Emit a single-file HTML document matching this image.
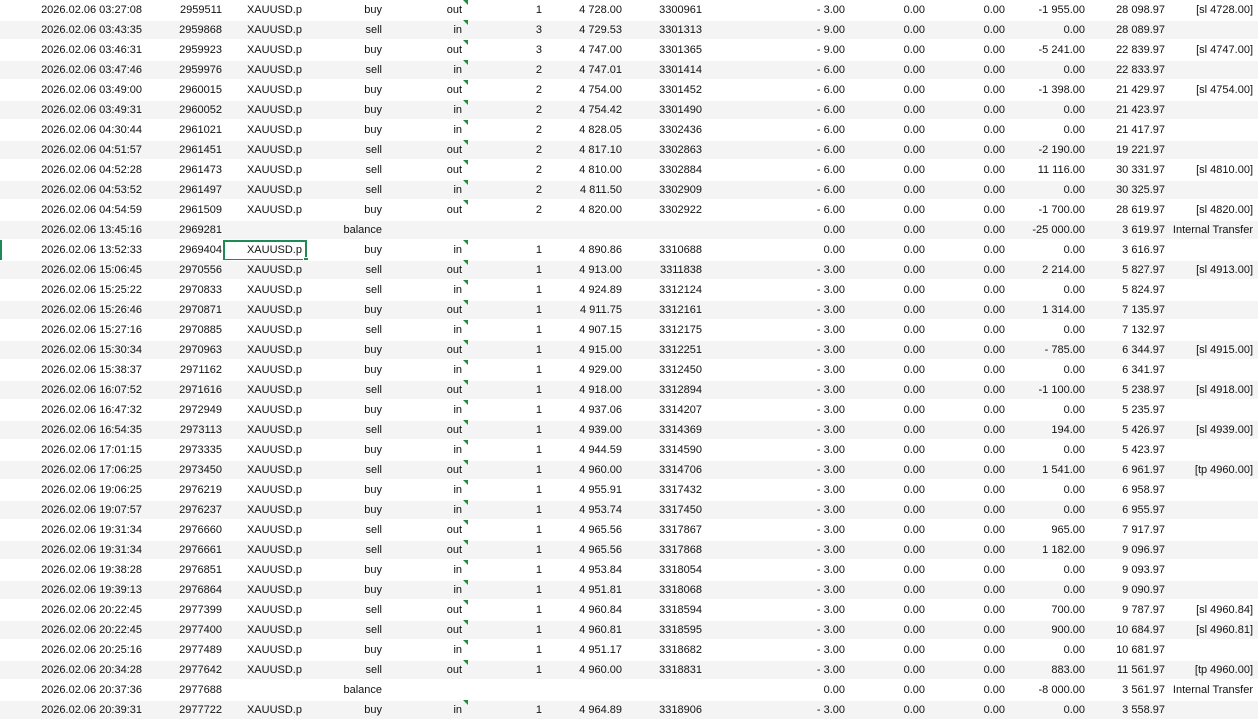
<!DOCTYPE html>
<html><head><meta charset="utf-8"><style>
body{margin:0;width:1258px;height:720px;overflow:hidden;background:#fff;font-family:"Liberation Sans",sans-serif;font-size:11px;color:#111}
.r{position:relative;height:20px;line-height:20px;display:flex;white-space:nowrap}
.r:nth-child(even){background:#f4f4f4;box-shadow:inset 0 1px 0 #fff,inset 0 -1px 0 #fff}
.r span{display:block;text-align:right;overflow:visible;letter-spacing:0;font-family:"Liberation Sans",sans-serif;font-size:11px}
.t{position:absolute;left:463px;top:0;width:0;height:0;border-top:5px solid #1d8c3c;border-left:5px solid transparent}
.sel{position:absolute;left:223px;top:0;width:80px;height:17px;border:2px solid #1e8a55}
.sel:after{content:"";position:absolute;right:-4px;bottom:-4px;width:4px;height:4px;background:#1e8a55;border:1px solid #fff}
.lb{position:absolute;left:0;top:0;width:2px;height:20px;background:#1e8a55}
</style></head><body>
<div id="t"></div>
<script>
const W=[142,80,80,80,80,80,80,80,143,80,80,80,80,88];
const D=`03:27:08|2959511|XAUUSD.p|buy|out|1|4 728.00|3300961|- 3.00|-1 955.00|28 098.97|[sl 4728.00]
03:43:35|2959868|XAUUSD.p|sell|in|3|4 729.53|3301313|- 9.00|0.00|28 089.97|
03:46:31|2959923|XAUUSD.p|buy|out|3|4 747.00|3301365|- 9.00|-5 241.00|22 839.97|[sl 4747.00]
03:47:46|2959976|XAUUSD.p|sell|in|2|4 747.01|3301414|- 6.00|0.00|22 833.97|
03:49:00|2960015|XAUUSD.p|buy|out|2|4 754.00|3301452|- 6.00|-1 398.00|21 429.97|[sl 4754.00]
03:49:31|2960052|XAUUSD.p|buy|in|2|4 754.42|3301490|- 6.00|0.00|21 423.97|
04:30:44|2961021|XAUUSD.p|buy|in|2|4 828.05|3302436|- 6.00|0.00|21 417.97|
04:51:57|2961451|XAUUSD.p|sell|out|2|4 817.10|3302863|- 6.00|-2 190.00|19 221.97|
04:52:28|2961473|XAUUSD.p|sell|out|2|4 810.00|3302884|- 6.00|11 116.00|30 331.97|[sl 4810.00]
04:53:52|2961497|XAUUSD.p|sell|in|2|4 811.50|3302909|- 6.00|0.00|30 325.97|
04:54:59|2961509|XAUUSD.p|buy|out|2|4 820.00|3302922|- 6.00|-1 700.00|28 619.97|[sl 4820.00]
13:45:16|2969281||balance|||||0.00|-25 000.00|3 619.97|Internal Transfer
13:52:33|2969404|XAUUSD.p|buy|in|1|4 890.86|3310688|0.00|0.00|3 616.97|
15:06:45|2970556|XAUUSD.p|sell|out|1|4 913.00|3311838|- 3.00|2 214.00|5 827.97|[sl 4913.00]
15:25:22|2970833|XAUUSD.p|sell|in|1|4 924.89|3312124|- 3.00|0.00|5 824.97|
15:26:46|2970871|XAUUSD.p|buy|out|1|4 911.75|3312161|- 3.00|1 314.00|7 135.97|
15:27:16|2970885|XAUUSD.p|sell|in|1|4 907.15|3312175|- 3.00|0.00|7 132.97|
15:30:34|2970963|XAUUSD.p|buy|out|1|4 915.00|3312251|- 3.00|- 785.00|6 344.97|[sl 4915.00]
15:38:37|2971162|XAUUSD.p|buy|in|1|4 929.00|3312450|- 3.00|0.00|6 341.97|
16:07:52|2971616|XAUUSD.p|sell|out|1|4 918.00|3312894|- 3.00|-1 100.00|5 238.97|[sl 4918.00]
16:47:32|2972949|XAUUSD.p|buy|in|1|4 937.06|3314207|- 3.00|0.00|5 235.97|
16:54:35|2973113|XAUUSD.p|sell|out|1|4 939.00|3314369|- 3.00|194.00|5 426.97|[sl 4939.00]
17:01:15|2973335|XAUUSD.p|buy|in|1|4 944.59|3314590|- 3.00|0.00|5 423.97|
17:06:25|2973450|XAUUSD.p|sell|out|1|4 960.00|3314706|- 3.00|1 541.00|6 961.97|[tp 4960.00]
19:06:25|2976219|XAUUSD.p|buy|in|1|4 955.91|3317432|- 3.00|0.00|6 958.97|
19:07:57|2976237|XAUUSD.p|buy|in|1|4 953.74|3317450|- 3.00|0.00|6 955.97|
19:31:34|2976660|XAUUSD.p|sell|out|1|4 965.56|3317867|- 3.00|965.00|7 917.97|
19:31:34|2976661|XAUUSD.p|sell|out|1|4 965.56|3317868|- 3.00|1 182.00|9 096.97|
19:38:28|2976851|XAUUSD.p|buy|in|1|4 953.84|3318054|- 3.00|0.00|9 093.97|
19:39:13|2976864|XAUUSD.p|buy|in|1|4 951.81|3318068|- 3.00|0.00|9 090.97|
20:22:45|2977399|XAUUSD.p|sell|out|1|4 960.84|3318594|- 3.00|700.00|9 787.97|[sl 4960.84]
20:22:45|2977400|XAUUSD.p|sell|out|1|4 960.81|3318595|- 3.00|900.00|10 684.97|[sl 4960.81]
20:25:16|2977489|XAUUSD.p|buy|in|1|4 951.17|3318682|- 3.00|0.00|10 681.97|
20:34:28|2977642|XAUUSD.p|sell|out|1|4 960.00|3318831|- 3.00|883.00|11 561.97|[tp 4960.00]
20:37:36|2977688||balance|||||0.00|-8 000.00|3 561.97|Internal Transfer
20:39:31|2977722|XAUUSD.p|buy|in|1|4 964.89|3318906|- 3.00|0.00|3 558.97|`;
let h='';
D.split('\n').forEach((l,i)=>{const f=l.split('|');
const c=['2026.02.06 '+f[0],f[1],f[2],f[3],f[4],f[5],f[6],f[7],f[8],'0.00','0.00',f[9],f[10],f[11]];
h+='<div class="r">';
c.forEach((v,j)=>{h+=`<span style="width:${W[j]}px">${v}</span>`});
if(f[4])h+='<i class="t"></i>';
if(i==12)h+='<i class="sel"></i><i class="lb"></i>';
h+='</div>';});
document.getElementById('t').innerHTML=h;
</script>
</body></html>
